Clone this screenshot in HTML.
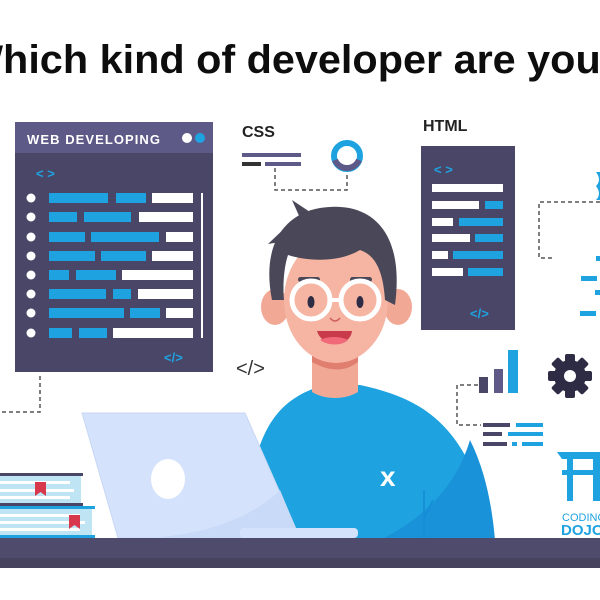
<!DOCTYPE html>
<html><head><meta charset="utf-8"><style>
html,body{margin:0;padding:0;background:#fff;width:600px;height:600px;overflow:hidden}
svg{display:block}
text{font-family:"Liberation Sans",sans-serif}
</style></head><body>
<svg width="600" height="600" viewBox="0 0 600 600" xmlns="http://www.w3.org/2000/svg">
<rect width="600" height="600" fill="#fff"/>
<text x="-36" y="73" font-size="40" font-weight="bold" fill="#0d0d0d" textLength="662" lengthAdjust="spacingAndGlyphs">Which kind of developer are you?</text>

<!-- web developing panel -->
<rect x="15" y="122" width="198" height="250" fill="#4a4668"/>
<rect x="15" y="122" width="198" height="31" fill="#5e5a88"/>
<text x="27" y="144" font-size="13" font-weight="bold" fill="#fff" textLength="133">WEB DEVELOPING</text>
<circle cx="187" cy="138" r="5" fill="#fff"/><circle cx="200" cy="138" r="5" fill="#1ea3e0"/>
<text x="36" y="178" font-size="13" font-weight="bold" fill="#1ea3e0">&lt; &gt;</text>
<g fill="#fff">
<circle cx="31" cy="198" r="4.5"/><circle cx="31" cy="217" r="4.5"/><circle cx="31" cy="237" r="4.5"/><circle cx="31" cy="256" r="4.5"/>
<circle cx="31" cy="275" r="4.5"/><circle cx="31" cy="294" r="4.5"/><circle cx="31" cy="313" r="4.5"/><circle cx="31" cy="333" r="4.5"/>
<rect x="152" y="193" width="41" height="10"/><rect x="139" y="212" width="54" height="10"/><rect x="166" y="232" width="27" height="10"/>
<rect x="152" y="251" width="41" height="10"/><rect x="122" y="270" width="71" height="10"/><rect x="138" y="289" width="55" height="10"/>
<rect x="166" y="308" width="27" height="10"/><rect x="113" y="328" width="80" height="10"/>
<rect x="201" y="193" width="2" height="145"/>
</g>
<g fill="#1ea3e0">
<rect x="49" y="193" width="59" height="10"/><rect x="116" y="193" width="30" height="10"/>
<rect x="49" y="212" width="28" height="10"/><rect x="84" y="212" width="47" height="10"/>
<rect x="49" y="232" width="36" height="10"/><rect x="91" y="232" width="68" height="10"/>
<rect x="49" y="251" width="46" height="10"/><rect x="101" y="251" width="45" height="10"/>
<rect x="49" y="270" width="20" height="10"/><rect x="76" y="270" width="40" height="10"/>
<rect x="49" y="289" width="57" height="10"/><rect x="113" y="289" width="18" height="10"/>
<rect x="49" y="308" width="75" height="10"/><rect x="130" y="308" width="30" height="10"/>
<rect x="49" y="328" width="23" height="10"/><rect x="79" y="328" width="28" height="10"/>
</g>
<text x="164" y="362" font-size="13" font-weight="bold" fill="#1ea3e0">&lt;/&gt;</text>
<path d="M40 376 V412 H0" fill="none" stroke="#555" stroke-width="1.5" stroke-dasharray="4 3"/>

<!-- CSS -->
<text x="242" y="137" font-size="16" font-weight="bold" fill="#222">CSS</text>
<rect x="242" y="153" width="59" height="4" fill="#5e5a88"/>
<rect x="242" y="162" width="19" height="4" fill="#333"/>
<rect x="265" y="162" width="36" height="4" fill="#5e5a88"/>
<circle cx="347" cy="156" r="13" fill="none" stroke="#1ea3e0" stroke-width="6"/>
<path d="M335 160 A13 13 0 0 0 359 160" fill="none" stroke="#5e5a88" stroke-width="6"/>
<path d="M275 168 V190 H347 V172" fill="none" stroke="#555" stroke-width="1.5" stroke-dasharray="4 3"/>

<!-- HTML -->
<text x="423" y="131" font-size="16" font-weight="bold" fill="#222">HTML</text>
<rect x="421" y="146" width="94" height="184" fill="#4a4668"/>
<text x="434" y="174" font-size="13" font-weight="bold" fill="#1ea3e0">&lt; &gt;</text>
<g fill="#fff">
<rect x="432" y="184" width="71" height="8"/><rect x="432" y="201" width="47" height="8"/><rect x="432" y="218" width="21" height="8"/>
<rect x="432" y="234" width="38" height="8"/><rect x="432" y="251" width="16" height="8"/><rect x="432" y="268" width="31" height="8"/>
</g>
<g fill="#1ea3e0">
<rect x="485" y="201" width="18" height="8"/><rect x="459" y="218" width="44" height="8"/><rect x="475" y="234" width="28" height="8"/>
<rect x="453" y="251" width="50" height="8"/><rect x="468" y="268" width="35" height="8"/>
</g>
<text x="470" y="318" font-size="13" font-weight="bold" fill="#1ea3e0">&lt;/&gt;</text>

<!-- right partial -->
<path d="M600 202 H539 V258 H553" fill="none" stroke="#555" stroke-width="1.5" stroke-dasharray="4 3"/>
<path d="M596 172 q6 8 0 14 q6 8 0 14 h6 v-28z" fill="#1ea3e0"/>
<g fill="#1ea3e0"><rect x="596" y="256" width="4" height="5"/><rect x="581" y="276" width="16" height="5"/><rect x="595" y="290" width="5" height="5"/><rect x="580" y="311" width="16" height="5"/></g>

<!-- chart -->
<rect x="479" y="377" width="9" height="16" fill="#4a4668"/>
<rect x="494" y="369" width="9" height="24" fill="#5e5a88"/>
<rect x="508" y="350" width="10" height="43" fill="#1ea3e0"/>
<path d="M478 385 H457 V425 H481" fill="none" stroke="#555" stroke-width="1.5" stroke-dasharray="4 3"/>
<g fill="#4a4668"><rect x="483" y="423" width="27" height="4"/><rect x="483" y="432" width="19" height="4"/><rect x="483" y="442" width="24" height="4"/></g>
<g fill="#1ea3e0"><rect x="516" y="423" width="27" height="4"/><rect x="508" y="432" width="35" height="4"/><rect x="512" y="442" width="5" height="4"/><rect x="522" y="442" width="21" height="4"/></g>
<!-- gear -->
<g transform="translate(570 376)" fill="#2e2c44">
<circle r="16"/>
<g><rect x="-5" y="-22" width="10" height="44" rx="2"/><rect x="-5" y="-22" width="10" height="44" rx="2" transform="rotate(45)"/><rect x="-5" y="-22" width="10" height="44" rx="2" transform="rotate(90)"/><rect x="-5" y="-22" width="10" height="44" rx="2" transform="rotate(135)"/></g>
<circle r="6" fill="#fff"/>
</g>
<text x="236" y="375" font-size="20" fill="#333">&lt;/&gt;</text>

<!-- logo -->
<g fill="#1ea3e0">
<path d="M557 452 H600 V459 H562z"/>
<rect x="567" y="459" width="6" height="42"/><rect x="562" y="470" width="38" height="5"/>
<rect x="593" y="459" width="7" height="42"/>
</g>
<text x="562" y="521" font-size="11" fill="#1ea3e0">CODING</text>
<text x="561" y="535" font-size="15" font-weight="bold" fill="#1ea3e0">DOJO</text>

<!-- character -->
<path d="M245 540 C250 440 270 400 325 385 L360 385 C430 400 470 430 495 540 Z" fill="#1ea3e0"/>
<path d="M380 540 C420 520 455 490 470 440 C485 470 492 505 495 540Z" fill="#1a92da"/>
<path d="M312 345 H358 V392 C345 400 325 400 312 392Z" fill="#f1a996"/>
<path d="M312 362 C330 372 345 372 358 362 V350 H312Z" fill="#e07e70"/>
<ellipse cx="275" cy="307" rx="14" ry="18" fill="#f1a996"/>
<ellipse cx="398" cy="307" rx="14" ry="18" fill="#f1a996"/>
<ellipse cx="336" cy="300" rx="52" ry="63" fill="#f5b5a2"/>
<path d="M272 300 C262 250 280 215 320 208 C370 200 405 230 395 305 L385 300 C383 270 375 255 360 250 C340 262 310 262 288 255 C283 270 283 290 284 300Z" fill="#4a4858"/>
<path d="M288 225 L268 244 L292 240Z M300 218 L292 200 L310 212Z" fill="#4a4858"/>
<rect x="298" y="277" width="22" height="5" rx="2.5" fill="#4a4858"/><rect x="350" y="277" width="22" height="5" rx="2.5" fill="#4a4858"/>
<circle cx="311" cy="300" r="19" fill="none" stroke="#fff" stroke-width="5"/>
<circle cx="360" cy="300" r="19" fill="none" stroke="#fff" stroke-width="5"/>
<rect x="329" y="298" width="13" height="4" fill="#fff"/>
<ellipse cx="311" cy="302" rx="3.5" ry="6" fill="#2e2c44"/>
<ellipse cx="360" cy="302" rx="3.5" ry="6" fill="#2e2c44"/>
<path d="M330 318 q5 6 10 0" fill="none" stroke="#d06060" stroke-width="1.5"/>
<path d="M317 331 H352 C350 348 322 348 317 331Z" fill="#c93a4a"/>
<path d="M320 340 C328 346 342 346 348 340 C340 336 328 336 320 340Z" fill="#f06a7a"/>
<text x="380" y="486" font-size="28" font-weight="bold" fill="#fff">x</text>
<path d="M424 490 V540 M424 518 L433 500" stroke="#148bd6" stroke-width="1.5" fill="none"/>

<!-- laptop -->
<path d="M82 413 H245 L300 538 H118 Z" fill="#d4e2fb" stroke="#c7d7f5" stroke-width="1"/>
<path d="M280 490 L300 538 H150 C200 535 250 520 280 490Z" fill="#c9daf8"/>
<ellipse cx="168" cy="479" rx="17" ry="20" fill="#fff"/>
<rect x="240" y="528" width="118" height="10" rx="4" fill="#d4e2fb"/>

<!-- books -->
<rect x="0" y="473" width="83" height="3" fill="#4a4668"/>
<rect x="0" y="476" width="81" height="27" fill="#bfe4f4"/>
<g fill="#fff"><rect x="0" y="481" width="70" height="3"/><rect x="0" y="489" width="74" height="3"/><rect x="0" y="496" width="70" height="3"/></g>
<path d="M35 482 h11 v14 l-5.5 -4 l-5.5 4z" fill="#d8384c"/>
<rect x="0" y="503" width="83" height="3" fill="#4a4668"/>
<rect x="0" y="506" width="95" height="3" fill="#1ea3e0"/>
<rect x="0" y="509" width="92" height="26" fill="#bfe4f4"/>
<g fill="#fff"><rect x="0" y="514" width="80" height="3"/><rect x="0" y="521" width="85" height="3"/><rect x="0" y="528" width="80" height="3"/></g>
<path d="M69 515 h11 v14 l-5.5 -4 l-5.5 4z" fill="#d8384c"/>
<rect x="0" y="535" width="95" height="3" fill="#1ea3e0"/>

<!-- desk -->
<rect x="0" y="538" width="600" height="20" fill="#4e4b6c"/>
<rect x="0" y="558" width="600" height="10" fill="#46435f"/>
</svg>
</body></html>
